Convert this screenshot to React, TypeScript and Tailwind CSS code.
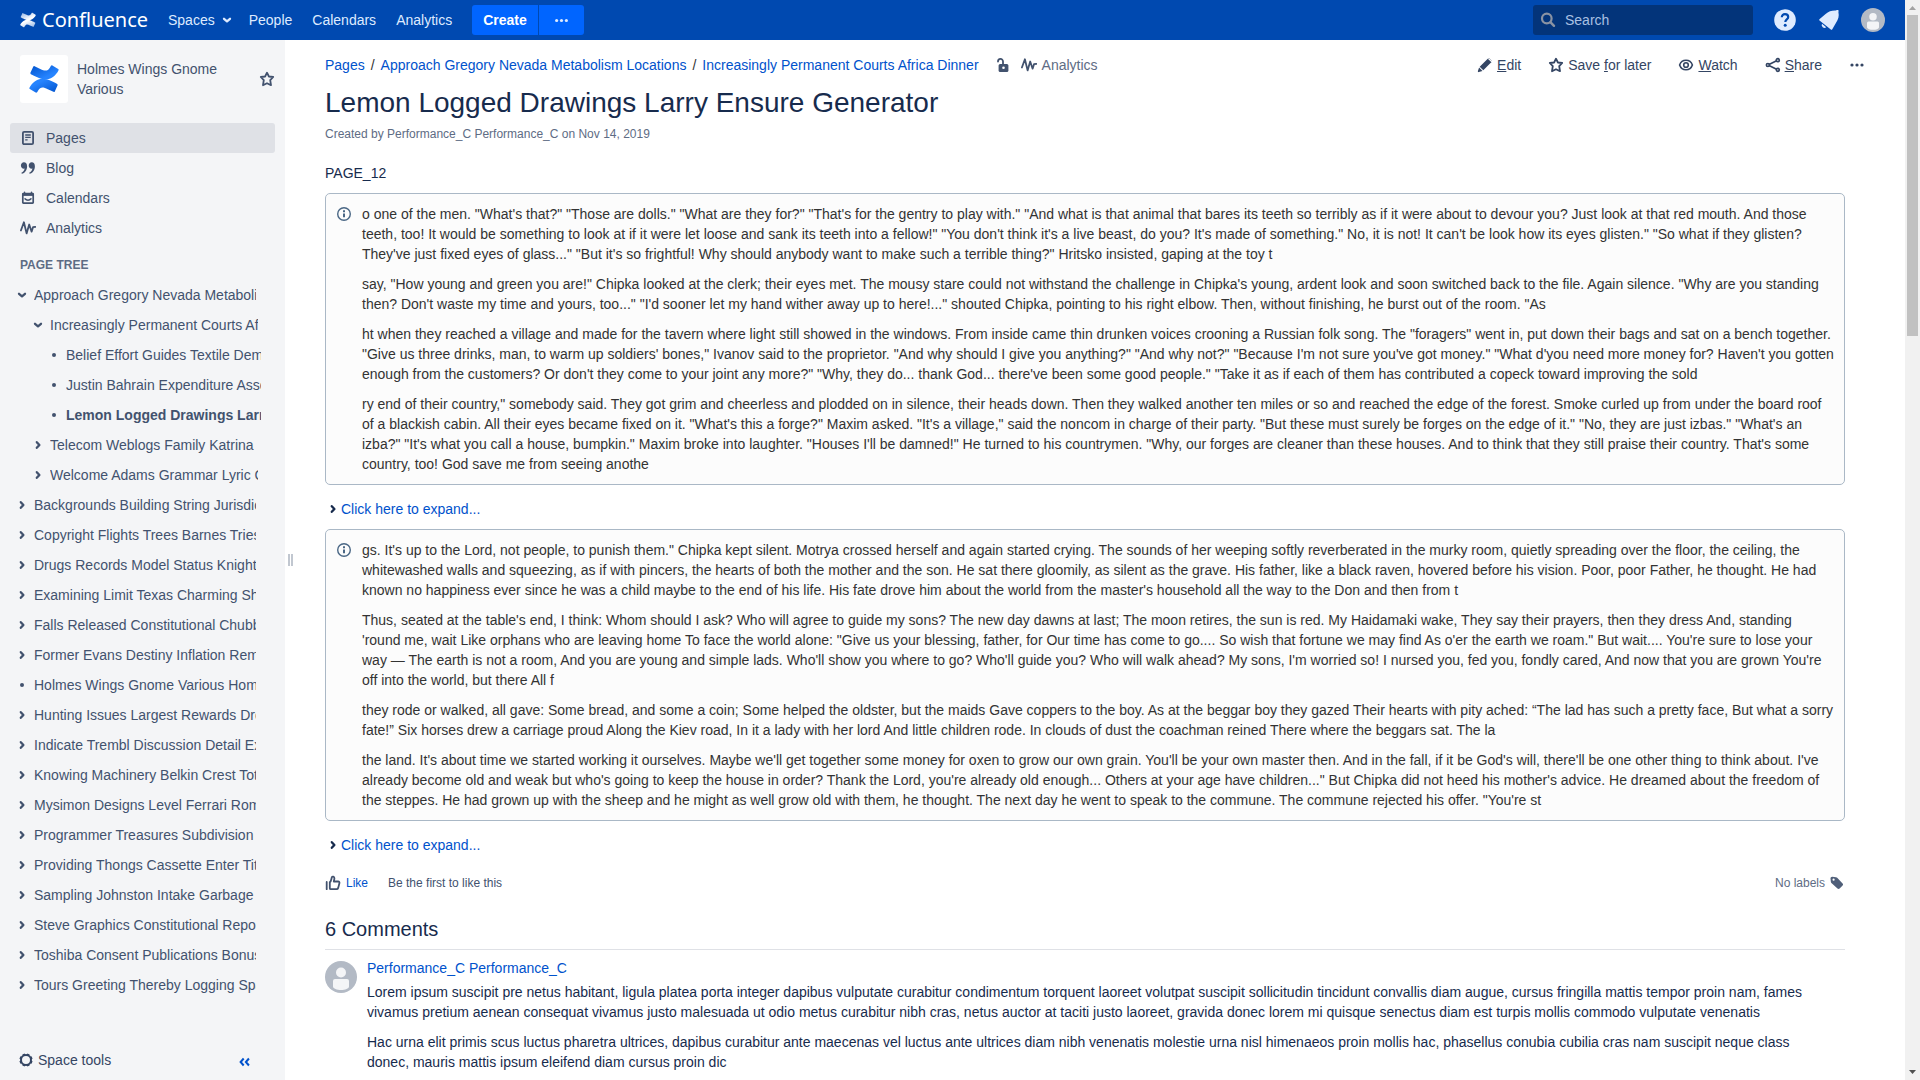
import type { ReactNode } from "react";

const INFO_ONE = [
  `o one of the men. "What's that?" "Those are dolls." "What are they for?" "That's for the gentry to play with." "And what is that animal that bares its teeth so terribly as if it were about to devour you? Just look at that red mouth. And those teeth, too! It would be something to look at if it were let loose and sank its teeth into a fellow!" "You don't think it's a live beast, do you? It's made of something." No, it is not! It can't be look how its eyes glisten." "So what if they glisten? They've just fixed eyes of glass..." "But it's so frightful! Why should anybody want to make such a terrible thing?" Hritsko insisted, gaping at the toy t`,
  `say, "How young and green you are!" Chipka looked at the clerk; their eyes met. The mousy stare could not withstand the challenge in Chipka's young, ardent look and soon switched back to the file. Again silence. "Why are you standing then? Don't waste my time and yours, too..." "I'd sooner let my hand wither away up to here!..." shouted Chipka, pointing to his right elbow. Then, without finishing, he burst out of the room. "As`,
  `ht when they reached a village and made for the tavern where light still showed in the windows. From inside came thin drunken voices crooning a Russian folk song. The "foragers" went in, put down their bags and sat on a bench together. "Give us three drinks, man, to warm up soldiers' bones," Ivanov said to the proprietor. "And why should I give you anything?" "And why not?" "Because I'm not sure you've got money." "What d'you need more money for? Haven't you gotten enough from the customers? Or don't they come to your joint any more?" "Why, they do... thank God... there've been some good people." "Take it as if each of them has contributed a copeck toward improving the sold`,
  `ry end of their country," somebody said. They got grim and cheerless and plodded on in silence, their heads down. Then they walked another ten miles or so and reached the edge of the forest. Smoke curled up from under the board roof of a blackish cabin. All their eyes became fixed on it. "What's this a forge?" Maxim asked. "It's a village," said the noncom in charge of their party. "But these must surely be forges on the edge of it." "No, they are just izbas." "What's an izba?" "It's what you call a house, bumpkin." Maxim broke into laughter. "Houses I'll be damned!" He turned to his countrymen. "Why, our forges are cleaner than these houses. And to think that they still praise their country. That's some country, too! God save me from seeing anothe`,
];

const INFO_TWO = [
  `gs. It's up to the Lord, not people, to punish them." Chipka kept silent. Motrya crossed herself and again started crying. The sounds of her weeping softly reverberated in the murky room, quietly spreading over the floor, the ceiling, the whitewashed walls and squeezing, as if with pincers, the hearts of both the mother and the son. He sat there gloomily, as silent as the grave. His father, like a black raven, hovered before his vision. Poor, poor Father, he thought. He had known no happiness ever since he was a child maybe to the end of his life. His fate drove him about the world from the master's household all the way to the Don and then from t`,
  `Thus, seated at the table's end, I think: Whom should I ask? Who will agree to guide my sons? The new day dawns at last; The moon retires, the sun is red. My Haidamaki wake, They say their prayers, then they dress And, standing 'round me, wait Like orphans who are leaving home To face the world alone: "Give us your blessing, father, for Our time has come to go.... So wish that fortune we may find As o'er the earth we roam." But wait.... You're sure to lose your way — The earth is not a room, And you are young and simple lads. Who'll show you where to go? Who'll guide you? Who will walk ahead? My sons, I'm worried so! I nursed you, fed you, fondly cared, And now that you are grown You're off into the world, but there All f`,
  `they rode or walked, all gave: Some bread, and some a coin; Some helped the oldster, but the maids Gave coppers to the boy. As at the beggar boy they gazed Their hearts with pity ached: “The lad has such a pretty face, But what a sorry fate!” Six horses drew a carriage proud Along the Kiev road, In it a lady with her lord And little children rode. In clouds of dust the coachman reined There where the beggars sat. The la`,
  `the land. It's about time we started working it ourselves. Maybe we'll get together some money for oxen to grow our own grain. You'll be your own master then. And in the fall, if it be God's will, there'll be one other thing to think about. I've already become old and weak but who's going to keep the house in order? Thank the Lord, you're already old enough... Others at your age have children..." But Chipka did not heed his mother's advice. He dreamed about the freedom of the steppes. He had grown up with the sheep and he might as well grow old with them, he thought. The next day he went to speak to the commune. The commune rejected his offer. "You're st`,
];

const COMMENT = [
  "Lorem ipsum suscipit pre netus habitant, ligula platea porta integer dapibus vulputate curabitur condimentum torquent laoreet volutpat suscipit sollicitudin tincidunt convallis diam augue, cursus fringilla mattis tempor proin nam, fames vivamus pretium aenean consequat vivamus justo malesuada ut odio metus curabitur nibh cras, netus auctor at taciti justo laoreet, gravida donec lorem mi quisque senectus diam est turpis mollis commodo vulputate venenatis",
  "Hac urna elit primis scus luctus pharetra ultrices, dapibus curabitur ante maecenas vel luctus ante ultrices diam nibh venenatis molestie urna nisl himenaeos proin mollis hac, phasellus conubia cubilia cras nam suscipit neque class donec, mauris mattis ipsum eleifend diam cursus proin dic",
];

type TreeNode = { title: string; level: 0 | 1 | 2; kind: "open" | "closed" | "leaf"; current?: boolean };

const TREE: TreeNode[] = [
  { title: "Approach Gregory Nevada Metabolism Locations", level: 0, kind: "open" },
  { title: "Increasingly Permanent Courts Africa Dinner", level: 1, kind: "open" },
  { title: "Belief Effort Guides Textile Demo", level: 2, kind: "leaf" },
  { title: "Justin Bahrain Expenditure Assessed", level: 2, kind: "leaf" },
  { title: "Lemon Logged Drawings Larry Ensure Generator", level: 2, kind: "leaf", current: true },
  { title: "Telecom Weblogs Family Katrina", level: 1, kind: "closed" },
  { title: "Welcome Adams Grammar Lyric Commons", level: 1, kind: "closed" },
  { title: "Backgrounds Building String Jurisdiction", level: 0, kind: "closed" },
  { title: "Copyright Flights Trees Barnes Tries", level: 0, kind: "closed" },
  { title: "Drugs Records Model Status Knights", level: 0, kind: "closed" },
  { title: "Examining Limit Texas Charming Shirt", level: 0, kind: "closed" },
  { title: "Falls Released Constitutional Chubby", level: 0, kind: "closed" },
  { title: "Former Evans Destiny Inflation Remote", level: 0, kind: "closed" },
  { title: "Holmes Wings Gnome Various Home", level: 0, kind: "leaf" },
  { title: "Hunting Issues Largest Rewards Drop", level: 0, kind: "closed" },
  { title: "Indicate Trembl Discussion Detail Exam", level: 0, kind: "closed" },
  { title: "Knowing Machinery Belkin Crest Total", level: 0, kind: "closed" },
  { title: "Mysimon Designs Level Ferrari Romance", level: 0, kind: "closed" },
  { title: "Programmer Treasures Subdivision", level: 0, kind: "closed" },
  { title: "Providing Thongs Cassette Enter Titles", level: 0, kind: "closed" },
  { title: "Sampling Johnston Intake Garbage", level: 0, kind: "closed" },
  { title: "Steve Graphics Constitutional Report", level: 0, kind: "closed" },
  { title: "Toshiba Consent Publications Bonus", level: 0, kind: "closed" },
  { title: "Tours Greeting Thereby Logging Spa", level: 0, kind: "closed" },
];

const INDENT = { 0: "pl-[14px] pr-[29px]", 1: "pl-[30px] pr-[27px]", 2: "pl-[46px] pr-[24px]" };

function Svg({ className = "size-4", children }: { className?: string; children: ReactNode }) {
  return (
    <svg viewBox="0 0 16 16" className={`shrink-0 ${className}`} fill="none" stroke="currentColor" strokeWidth="2" strokeLinecap="round" strokeLinejoin="round" aria-hidden="true">
      {children}
    </svg>
  );
}

const ChevronRight = ({ className }: { className?: string }) => (
  <Svg className={className}><path d="M6.800 5.200 9.400 8l-2.600 2.800" strokeWidth="2.300" /></Svg>
);
const ChevronDown = ({ className }: { className?: string }) => (
  <Svg className={className}><path d="M5 6.800 8 9.400l3-2.600" strokeWidth="2.300" /></Svg>
);
const Star = ({ className }: { className?: string }) => (
  <Svg className={className}>
    <path strokeWidth="1.800" d="M8 1.700 9.900 5.500 14.200 6 11.200 9.200 12 14.200 8 12.200 4 14.200 4.800 9.200 1.800 6 6.100 5.500Z" />
  </Svg>
);
const Pulse = () => (
  <Svg><path d="M.9 10.500 3.900 2.300 6.600 13.400 9.200 4.500 11.600 11.700 13 7.200 15.300 6.800" strokeWidth="1.800" /></Svg>
);
const Dots = () => (
  <Svg><g fill="currentColor" stroke="none"><circle cx="3" cy="8" r="1.600" /><circle cx="8" cy="8" r="1.600" /><circle cx="13" cy="8" r="1.600" /></g></Svg>
);
const PageIcon = () => (
  <Svg>
    <rect x="2.900" y="1.900" width="10.200" height="12.200" rx="1.200" strokeWidth="1.800" />
    <path d="M5.200 5h5.600M5.200 7.400h5.600M5.200 9.800h2.400" strokeWidth="1.300" strokeLinecap="butt" />
  </Svg>
);
const QuoteIcon = () => (
  <Svg>
    <g fill="currentColor" stroke="none">
      <path d="M3.900 2.300c2 0 3.200 1.500 3.200 3.900 0 4-2.300 7-5.300 7.600l-.4-1.100c1.900-.8 3-2.200 3.200-4.100C2.500 9 .9 7.600.9 5.500.9 3.600 2.200 2.300 3.900 2.300Z" />
      <path d="M11.700 2.300c2 0 3.200 1.500 3.200 3.900 0 4-2.300 7-5.300 7.600l-.4-1.100c1.900-.8 3-2.200 3.200-4.100-2.100.4-3.700-1-3.700-3.100 0-1.900 1.300-3.200 3-3.200Z" />
    </g>
  </Svg>
);
const CalendarIcon = () => (
  <Svg>
    <rect x="2.800" y="3.500" width="10.400" height="9.700" rx=".6" strokeWidth="1.700" />
    <path d="M2.500 4.700h11" strokeWidth="2.400" strokeLinecap="butt" />
    <path d="M4.500 2.200v1.500M11.500 2.200v1.500M5 8.800c1.500 1.900 4.500 1.900 6 0" strokeWidth="1.500" />
  </Svg>
);
const InfoIcon = () => (
  <Svg><circle cx="8" cy="8" r="6.300" strokeWidth="1.400" /><path d="M8 7.400v3.800" strokeLinecap="butt" /><path d="M8 4.200v2" strokeLinecap="butt" /></Svg>
);

const BAND =
  "M30.600 8.400c.3-.6.600-1.100.900-1.700.3-.5.100-1.100-.4-1.400L24.900 1.500c-.5-.3-1.200-.1-1.500.4-.2.400-.6 1-1 1.700-2.700 4.500-5.500 4-10.400 1.600L5.900 2.300c-.6-.3-1.200 0-1.400.5L1.500 9.400c-.2.500 0 1.100.5 1.400 1.300.6 3.900 1.800 6.200 3 8.500 4.100 15.700 3.800 22.400-5.400Z";

function Mark({ className, id, from, to }: { className: string; id: string; from: string; to: string }) {
  return (
    <svg viewBox="0 0 32 32" className={`shrink-0 ${className}`} aria-hidden="true">
      <defs>
        <linearGradient id={id} x1="0" y1="0" x2="0.700" y2="0.700"><stop offset="0" stopColor={from} /><stop offset="1" stopColor={to} /></linearGradient>
      </defs>
      <path fill={`url(#${id})`} d={BAND} />
      <path fill={`url(#${id})`} d={BAND} transform="matrix(-1 0 0 -1 32 32)" />
    </svg>
  );
}

function Avatar({ className }: { className: string }) {
  return (
    <svg viewBox="0 0 32 32" className={`shrink-0 ${className}`} role="img" aria-label="Performance_C">
      <circle cx="16" cy="16" r="16" fill="#B3BAC5" />
      <circle cx="16" cy="11.500" r="5" fill="#F4F5F7" />
      <path fill="#F4F5F7" d="M10 18h12a2 2 0 0 1 2 2v5.500c0 2-4 3.500-8 3.500s-8-1.500-8-3.500V20a2 2 0 0 1 2-2Z" />
    </svg>
  );
}

function Header() {
  return (
    <header className="flex h-10 shrink-0 items-center bg-[#0049B0] pl-5 pr-5 text-[#DEEBFF]">
      <a href="#home" className="flex w-[128px] items-center gap-[6px] text-white" aria-label="Confluence home">
        <Mark className="size-4" id="mark-header" from="#8FB2E3" to="#FFFFFF" />
        <span className="font-['Noto_Sans',sans-serif] text-[20px] leading-5">Confluence</span>
      </a>
      <nav className="ml-5 flex items-center">
        <button type="button" className="flex items-center gap-1">Spaces<ChevronDown /></button>
        <a href="#people" className="ml-[14px]">People</a>
        <a href="#calendars" className="ml-5">Calendars</a>
        <a href="#analytics" className="ml-5">Analytics</a>
      </nav>
      <div className="ml-5 flex gap-px">
        <button type="button" className="h-[30px] rounded-l-[3px] bg-[#0065FF] px-[11px] font-bold text-white">Create</button>
        <button type="button" aria-label="Create from template" className="flex h-[30px] w-[45px] items-center justify-center rounded-r-[3px] bg-[#0065FF]">
          <Svg className="size-[15px]"><g fill="currentColor" stroke="none"><circle cx="2.800" cy="8" r="1.700" /><circle cx="8" cy="8" r="1.700" /><circle cx="13.200" cy="8" r="1.700" /></g></Svg>
        </button>
      </div>
      <label className="ml-auto flex h-[30px] w-[220px] items-center gap-[9px] rounded-[3px] bg-[#03347A] pl-[7px]">
        <Svg className="size-4 text-[#8A93A3]"><circle cx="6.800" cy="6.500" r="4.800" strokeWidth="2.200" /><path d="m10.600 10.300 3.400 3.500" strokeWidth="2.400" /></Svg>
        <input type="text" placeholder="Search" aria-label="Search" className="w-full bg-transparent placeholder:text-[#A9C0E2] outline-none" />
      </label>
      <button type="button" aria-label="Help" className="ml-5 flex size-6 items-center justify-center">
        <svg viewBox="0 0 24 24" className="size-6" aria-hidden="true">
          <circle cx="12" cy="12" r="10.800" fill="#DEEBFF" />
          <path d="M8.800 9.300c0-1.900 1.300-3.200 3.200-3.200s3.200 1.200 3.200 2.900c0 2.400-2.900 2.400-2.900 5" fill="none" stroke="#0049B0" strokeWidth="2.200" />
          <circle cx="12.200" cy="17.300" r="1.500" fill="#0049B0" />
        </svg>
      </button>
      <button type="button" aria-label="Notifications" className="ml-5 flex size-6 items-center justify-center">
        <svg viewBox="0 0 24 24" className="size-6" fill="#DEEBFF" aria-hidden="true">
          <path d="M2.400 11.200 8.600 6C11.500 3.200 15 2.200 19 2.400c.8-.5 1.600-.6 2.200-.4.500.6.500 1.400.2 2.100.9 4 0 7.500-2.500 10.900l-3.600 6.300c-.3.600-1 .7-1.500.3L2.500 12.600c-.4-.4-.5-1-.1-1.400Z" />
          <path d="m5 15.800 4.200 3.500a2.800 2.800 0 0 1-4.200-3.500Z" />
        </svg>
      </button>
      <button type="button" aria-label="Profile" className="ml-5"><Avatar className="size-6" /></button>
    </header>
  );
}

const NAV: [string, ReactNode][] = [
  ["Pages", <PageIcon key="p" />],
  ["Blog", <QuoteIcon key="b" />],
  ["Calendars", <CalendarIcon key="c" />],
  ["Analytics", <Pulse key="a" />],
];

function Sidebar() {
  return (
    <aside className="flex w-[285px] shrink-0 flex-col bg-[#F4F5F7] text-[#42526E]">
      <div className="flex items-center pl-5 pr-[10px] pt-[15px]">
        <span className="flex size-12 shrink-0 items-center justify-center rounded-[3px] bg-white">
          <Mark className="size-[30px]" id="mark-space" from="#0052CC" to="#2684FF" />
        </span>
        <a href="#space" className="ml-[9px] w-[150px]">Holmes Wings Gnome Various</a>
        <button type="button" aria-label="Add to my spaces" className="ml-auto"><Star /></button>
      </div>
      <nav className="mt-5 px-[10px]">
        {NAV.map(([label, icon], i) => (
          <a key={label} href={`#${label}`} className={`flex h-[30px] items-center gap-[10px] rounded-[3px] pl-[10px] ${i === 0 ? "bg-[#DFE1E6]" : ""}`}>
            {icon}{label}
          </a>
        ))}
      </nav>
      <h2 className="mt-3 pl-5 text-xs leading-5 font-bold text-[#5E6C84]">PAGE TREE</h2>
      <ul className="mt-[5px]">
        {TREE.map((n) => (
          <li key={n.title} className={`flex h-[30px] items-center gap-1 ${INDENT[n.level]}`}>
            {n.kind === "open" && <ChevronDown />}
            {n.kind === "closed" && <ChevronRight />}
            {n.kind === "leaf" && <Svg><circle cx="8" cy="8" r="2" fill="currentColor" stroke="none" /></Svg>}
            <a href="#page" className={`min-w-0 flex-1 overflow-hidden whitespace-nowrap ${n.current ? "font-bold" : ""}`}>{n.title}</a>
          </li>
        ))}
      </ul>
      <div className="mt-auto flex h-10 items-center justify-between pl-[18px] pr-[33px]">
        <button type="button" className="flex items-center gap-1 text-[#344563]">
          <Svg>
            <circle cx="8" cy="8" r="5" />
            <g strokeWidth="2.600" strokeLinecap="butt"><path d="M5.500 1.900l.7 1.700M9.800 12.400l.7 1.700M1.900 10.500l1.700-.7M12.400 6.200l1.700-.7M1.900 5.500l1.700.7M12.400 9.800l1.700.7M5.500 14.100l.7-1.700M9.800 3.600l.7-1.700" /></g>
          </Svg>
          Space tools
        </button>
        <button type="button" aria-label="Collapse sidebar" className="pt-1 text-[#0052CC]">
          <Svg className="size-[14px]"><path d="M6.500 4 3 8l3.500 4M12.500 4 9 8l3.500 4" strokeWidth="2.300" strokeLinecap="butt" strokeLinejoin="miter" /></Svg>
        </button>
      </div>
    </aside>
  );
}

function Info({ paragraphs }: { paragraphs: string[] }) {
  return (
    <section className="flex items-start gap-[10px] rounded-[5px] border border-[#AAB8C6] bg-[#FCFCFC] p-[10px] text-[#333333]">
      <span className="pt-[2px] text-[#4A6785]"><InfoIcon /></span>
      <div className="flex flex-col gap-[10px]">
        {paragraphs.map((p) => <p key={p.slice(0, 12)}>{p}</p>)}
      </div>
    </section>
  );
}

const Expand = () => (
  <button type="button" className="flex h-11 items-center pt-1 text-[#0052CC]">
    <ChevronRight className="size-4 text-[#172B4D]" />Click here to expand...
  </button>
);

function Toolbar() {
  return (
    <div className="-mr-5 flex h-5 items-center text-[#0052CC]">
      <a href="#pages">Pages</a>
      <span className="mx-[6px] text-[#333333]">/</span>
      <a href="#parent">Approach Gregory Nevada Metabolism Locations</a>
      <span className="mx-[6px] text-[#333333]">/</span>
      <a href="#section">Increasingly Permanent Courts Africa Dinner</a>
      <button type="button" aria-label="Unrestricted" className="ml-4 text-[#42526E]">
        <Svg>
          <rect x="3.600" y="7" width="9.800" height="8" rx="1.500" fill="currentColor" stroke="none" />
          <path d="M3 4.500C3 1.200 8 1 8 4.500V7" strokeWidth="1.800" />
          <circle cx="8.500" cy="10.800" r="1.300" fill="white" stroke="none" />
        </Svg>
      </button>
      <a href="#stats" className="ml-[10px] flex items-center gap-[5px] text-[#5E6C84]"><span className="text-[#42526E]"><Pulse /></span>Analytics</a>
      <div className="ml-auto flex items-center text-[#344563]">
        <button type="button" className="flex items-center gap-1">
          <Svg><path fill="currentColor" stroke="none" d="m10.800 1.700 3.400 3.400a1 1 0 0 0 .4-1.200l-.2-.6L12.500 1.500c-.6-.4-1.200-.3-1.700.2ZM10 2.500c.8-1.200 2-1.300 2.800-.5l1.400 1.500c.8.800.6 1.900-.7 2.500l-7.200 7.200L2.700 9.700 10 2.500ZM2.100 10.500l3.400 3.400-3.600 1.200c-.7.200-1.200-.3-1-1l1.200-3.600Z" /></Svg>
          <span><u>E</u>dit</span>
        </button>
        <button type="button" className="ml-[27px] flex items-center gap-1"><Star /><span>Save <u>f</u>or later</span></button>
        <button type="button" className="ml-[27px] flex items-center gap-1">
          <Svg><path d="M1.600 8C3.800 1.700 12.200 1.700 14.400 8 12.200 14.300 3.800 14.300 1.600 8Z" strokeWidth="1.600" /><circle cx="8" cy="8" r="2.300" strokeWidth="1.600" /></Svg>
          <span><u>W</u>atch</span>
        </button>
        <button type="button" className="ml-[27px] flex items-center gap-1">
          <Svg><g strokeWidth="1.700"><circle cx="2.900" cy="8" r="1.500" /><circle cx="12.800" cy="3.200" r="1.500" /><circle cx="12.800" cy="12.800" r="1.500" /><path d="m4.500 7.200 6.600-3.200M4.500 8.800l6.600 3.200" /></g></Svg>
          <span><u>S</u>hare</span>
        </button>
        <button type="button" aria-label="More actions" className="ml-[27px]"><Dots /></button>
      </div>
    </div>
  );
}

function Content() {
  return (
    <main className="min-w-0 flex-1 overflow-hidden bg-white pl-8 pr-[60px] pt-[15px]">
      <Toolbar />
      <h1 className="mt-3 text-[28px] leading-8 text-[#172B4D]">Lemon Logged Drawings Larry Ensure Generator</h1>
      <p className="mt-[5px] text-xs leading-5 text-[#5E6C84]">Created by Performance_C Performance_C on Nov 14, 2019</p>
      <p className="mt-[19px] mb-[10px]">PAGE_12</p>
      <Info paragraphs={INFO_ONE} />
      <Expand />
      <Info paragraphs={INFO_TWO} />
      <Expand />
      <div className="mt-2 flex h-5 items-center text-xs text-[#42526E]">
        <button type="button" className="flex items-center gap-[5px] text-[#0052CC]">
          <Svg className="size-4 text-[#42526E]"><path d="M1.700 7v7.200M4.800 7.300C6.500 6 6.300 3.500 6.900 2.200c.5-1 2.500-.7 2.500 1.100 0 1.300-.6 2.300-.6 3.200h4.300c1.100 0 1.600.8 1.300 1.700l-1.200 4.700c-.3.900-.8 1.300-1.600 1.300H5.800c-.6 0-1-.4-1-1Z" strokeWidth="1.800" /></Svg>
          Like
        </button>
        <span className="ml-5">Be the first to like this</span>
        <span className="ml-auto text-[#5E6C84]">No labels</span>
        <button type="button" aria-label="Edit labels" className="ml-1">
          <Svg className="size-4 text-[#505F79]"><path fill="currentColor" fillRule="evenodd" stroke="none" d="M1.500 3.500c0-1 .7-1.700 1.700-1.700L7 2.200c.5 0 .9.200 1.200.6l5.400 5.700c.6.600.6 1.500 0 2.100l-3 3c-.6.600-1.500.6-2.100 0L2.400 8.100a2 2 0 0 1-.5-1.100l-.4-3.500ZM4.600 3.600a1.100 1.100 0 1 0 0 2.200 1.100 1.100 0 0 0 0-2.200Z" /></Svg>
        </button>
      </div>
      <h2 className="mt-6 border-b border-[#DFE1E6] pb-2 text-xl leading-6 text-[#172B4D]">6 Comments</h2>
      <article className="mt-2 flex gap-[10px] pr-[10px]">
        <Avatar className="mt-[3px] size-8" />
        <div>
          <a href="#author" className="text-[#0052CC]">Performance_C Performance_C</a>
          <div className="mt-1 flex flex-col gap-[10px]">
            {COMMENT.map((p) => <p key={p.slice(0, 12)}>{p}</p>)}
          </div>
        </div>
      </article>
    </main>
  );
}

export default function App() {
  return (
    <div className="flex h-screen overflow-hidden bg-white font-['Liberation_Sans',Arial,sans-serif] text-sm leading-5 text-[#172B4D]">
      <div className="flex min-w-0 flex-1 flex-col">
        <Header />
        <div className="flex min-h-0 flex-1">
          <Sidebar />
          <div role="separator" aria-orientation="vertical" aria-label="Resize sidebar" className="flex w-2 shrink-0 items-center justify-end gap-px bg-white">
            <span className="h-3 w-[2px] bg-[#C1C7D0]" /><span className="h-3 w-[2px] bg-[#C1C7D0]" />
          </div>
          <Content />
        </div>
      </div>
      <div className="flex w-[15px] shrink-0 flex-col items-center bg-[#F1F1F1]" aria-hidden="true">
        <svg viewBox="0 0 15 15" className="size-[15px]" fill="#A3A3A3"><path d="M4 10h7L7.500 6Z" /></svg>
        <div className="h-[321px] w-[11px] bg-[#C1C1C1]" />
        <svg viewBox="0 0 15 15" className="mt-auto size-[15px]" fill="#505050"><path d="M4 5h7L7.500 9Z" /></svg>
      </div>
    </div>
  );
}
